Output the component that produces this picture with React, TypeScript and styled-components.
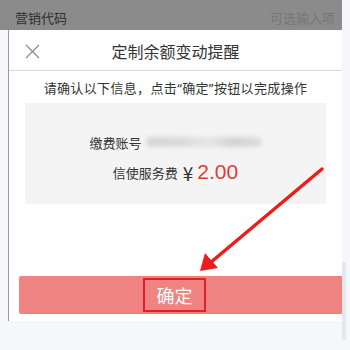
import React from "react";
import styled, { createGlobalStyle } from "styled-components";

const Global = createGlobalStyle`
  html, body { margin: 0; padding: 0; }
  body {
    background: #f6f7fb;
    font-family: "Noto Sans CJK SC", "Noto Sans", sans-serif;
  }
`;

const Page = styled.div`
  position: relative;
  width: 350px;
  height: 350px;
  overflow: hidden;
  background: #f6f7fb;
  display: flex;
  flex-direction: column;
`;

const TopBar = styled.div`
  width: 342px;
  height: 30px;
  box-sizing: border-box;
  background: #8b8b8b;
  display: flex;
  align-items: center;
  justify-content: space-between;
  padding: 4px 7px 0 15px;
  font-size: 13px;
`;

const TopLabel = styled.span<{ $muted?: boolean }>`
  color: ${(p) => (p.$muted ? "#767676" : "#2e2e2e")};
`;

const Modal = styled.div`
  margin-left: 8px;
  width: 334px;
  height: 291px;
  box-sizing: border-box;
  background: #ffffff;
  border-left: 1px solid #9a9a9a;
  display: flex;
  flex-direction: column;
`;

const Header = styled.div`
  height: 41px;
  box-sizing: border-box;
  border-bottom: 1px solid #d9d9d9;
  display: grid;
  grid-template-columns: 40px 1fr 40px;
  align-items: center;
`;

const Close = styled.div`
  display: flex;
  align-items: center;
  justify-content: center;
  padding-left: 6px;
  padding-top: 2px;
`;

const Title = styled.div`
  text-align: center;
  font-size: 16px;
  color: #333;
  padding-top: 2px;
`;

const Prompt = styled.div`
  text-align: center;
  font-family: "Noto Sans", "Noto Sans CJK SC", sans-serif;
  font-size: 13px;
  letter-spacing: 0.35px;
  color: #333;
  height: 32px;
  line-height: 34px;
`;

const InfoBox = styled.div`
  margin: 0 16px;
  height: 101px;
  background: #f4f4f4;
  display: flex;
  flex-direction: column;
  align-items: center;
  padding-top: 27px;
  box-sizing: border-box;
  gap: 6px;
`;

const Row = styled.div`
  display: flex;
  align-items: center;
  height: 24px;
  font-size: 13px;
  color: #333;
`;

const Blur = styled.span`
  display: inline-block;
  width: 116px;
  height: 10px;
  margin-left: 4px;
  border-radius: 5px;
  background: linear-gradient(
    90deg,
    #d6d6d6 0%,
    #dadada 30%,
    #e6e6e6 55%,
    #d2d2d2 75%,
    #dddddd 100%
  );
  filter: blur(2px);
`;

const Yen = styled.span`
  font-size: 19px;
  color: #333;
  margin-left: 5px;
`;

const Amount = styled.span`
  font-family: "Liberation Sans", Arial, sans-serif;
  font-size: 21px;
  color: #e23b36;
  margin-left: 4px;
`;

const Spacer = styled.div`
  flex: 1;
`;

const Button = styled.div`
  margin-left: 10px;
  margin-bottom: 7px;
  height: 38px;
  background: #ef8381;
  border-radius: 2px 0 0 2px;
  display: flex;
  align-items: center;
  justify-content: center;
`;

const ButtonLabel = styled.div`
  box-sizing: border-box;
  width: 63px;
  height: 34px;
  border: 2px solid #e21f26;
  color: #ffffff;
  font-size: 18px;
  display: flex;
  align-items: center;
  justify-content: center;
  margin-left: -12px;
`;

const Scroll = styled.div`
  position: absolute;
  left: 342px;
  top: 262px;
  width: 4px;
  height: 78px;
  border-radius: 2px;
  background: #e6e7ec;
`;

const Overlay = styled.svg`
  position: absolute;
  left: 0;
  top: 0;
  pointer-events: none;
`;

export default function App() {
  return (
    <>
      <Global />
      <Page>
        <TopBar>
          <TopLabel>营销代码</TopLabel>
          <TopLabel $muted>可选输入项</TopLabel>
        </TopBar>
        <Modal>
          <Header>
            <Close>
              <svg width="15" height="15" viewBox="0 0 15 15">
                <path d="M1 1 L14 14 M14 1 L1 14" stroke="#8a8a8a" strokeWidth="1.2" fill="none" />
              </svg>
            </Close>
            <Title>定制余额变动提醒</Title>
            <span />
          </Header>
          <Prompt>请确认以下信息，点击“确定”按钮以完成操作</Prompt>
          <InfoBox>
            <Row>
              缴费账号
              <Blur />
            </Row>
            <Row>
              信使服务费
              <Yen>¥</Yen>
              <Amount>2.00</Amount>
            </Row>
          </InfoBox>
          <Spacer />
          <Button>
            <ButtonLabel>确定</ButtonLabel>
          </Button>
        </Modal>
        <Scroll />
        <Overlay width="350" height="350" viewBox="0 0 350 350">
          <line x1="322" y1="169" x2="210" y2="263" stroke="#ee1c1c" strokeWidth="3.5" strokeLinecap="round" />
          <polygon points="200,271 205,253 218,268" fill="#ee1c1c" />
        </Overlay>
      </Page>
    </>
  );
}
